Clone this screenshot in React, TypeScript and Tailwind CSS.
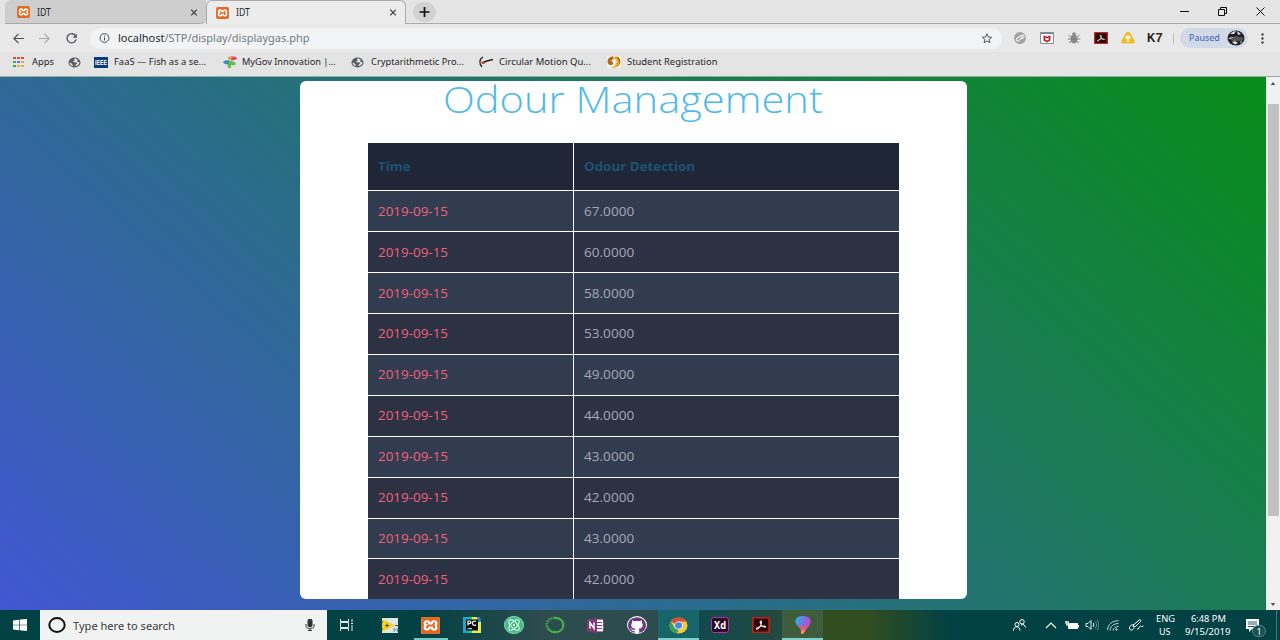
import { useLayoutEffect, useRef, useState, type ReactNode } from "react";
import { SiXampp, SiGithub } from "react-icons/si";
import { Atom } from "lucide-react";

/** Single-line label stretched horizontally to an exact width. */
function Label({ w, className = "", children }: { w: number; className?: string; children: ReactNode }) {
  const ref = useRef<HTMLSpanElement>(null);
  const [scale, setScale] = useState(1);
  useLayoutEffect(() => {
    if (ref.current) setScale(w / ref.current.offsetWidth);
  }, [w]);
  return (
    <span className={"block shrink-0 whitespace-nowrap " + className} style={{ width: w }}>
      <span ref={ref} className="inline-block origin-left" style={{ transform: `scaleX(${scale})` }}>
        {children}
      </span>
    </span>
  );
}

function XamppIcon({ className }: { className: string }) {
  return (
    <span className={"block shrink-0 overflow-hidden rounded-[2px] bg-[#d4601c] " + className}>
      <span className="block h-full w-full rounded-[2px] bg-white text-[#e36a25]">
        <SiXampp preserveAspectRatio="none" className="h-full w-full" />
      </span>
    </span>
  );
}

function Close({ className }: { className: string }) {
  return (
    <svg viewBox="0 0 10 10" className={className} stroke="currentColor" strokeWidth="1.500" fill="none">
      <path d="m1 1 8 8M9 1 1 9" />
    </svg>
  );
}

function Globe() {
  return (
    <svg viewBox="0 0 14 14" className="h-[11px] w-[13px] shrink-0" preserveAspectRatio="none">
      <circle cx="7" cy="7" r="6.500" fill="#5a5d61" />
      <path d="M7.500 1.800c-1 .4-1.300 1.300-.6 1.900.8.6.2 1.500-.8 1.500-.9.100-.6 1.400.4 1.500l2.700.2c1.200.2.700 1.500-.1 1.900-.9.500-.5 2.200-1.800 2.900 3.500-.2 5.100-2.700 4.900-5.200l-1.800-.2c-.9-.1-.6-1.300.2-1.500C10.300 3 9 2 7.500 1.800ZM1.600 7c.2 2.200 1.400 3.800 3.500 4.500l.2-1.500C3.900 9.700 4.300 8 3.200 7.600Z" fill="#e8e8e8" />
    </svg>
  );
}

function AcrobatIcon({ className }: { className: string }) {
  return (
    <svg viewBox="0 0 20 20" className={className} preserveAspectRatio="none">
      <rect x="1" y="1" width="18" height="18" fill="#2a0505" stroke="#c5221b" strokeWidth="1.800" />
      <path d="M9.600 5c1.500-.4 1.100 3.200-.2 6-1.200 2.700-3.400 4.800-4.400 4.100-.9-.8 2-2.700 4.800-3.400 2.700-.7 5.500-.6 5.400.6-.1 1.300-3.200.1-4.800-2.400C9 7.800 8.700 5.300 9.600 5Z" fill="none" stroke="#f1e6e6" strokeWidth="1.200" />
    </svg>
  );
}

function Tab({ active = false }: { active?: boolean }) {
  return (
    <div
      className={
        "flex h-full shrink-0 items-center pr-2 " +
        (active
          ? "w-[200px] rounded-t-md border-x border-t border-[#aaabad] bg-[#ececec] pl-[9px]"
          : "w-[201px] rounded-tl-md rounded-br-md border-b border-[#a9a9a9] bg-[#cecece] pl-3 pt-px")
      }
    >
      <XamppIcon className="h-3 w-[13px]" />
      <Label w={14} className="ml-[7px] text-[10px] text-[#2b2b2b]">IDT</Label>
      <Close className="ml-auto h-[7px] w-2 text-[#333]" />
    </div>
  );
}

function TitleBar() {
  return (
    <div className="flex h-6 shrink-0 bg-[#e5e5e5] pl-[5px]">
      <Tab />
      <Tab active />
      <div className="flex flex-1 items-center border-b border-[#ababab] pl-[7px]">
        <span className="flex h-5 w-[23px] items-center justify-center rounded-full bg-[#d2d2d2]">
          <svg viewBox="0 0 10 10" className="h-[10px] w-[11px]" stroke="#111" strokeWidth="1.700"><path d="M5 0v10M0 5h10" /></svg>
        </span>
        <div className="ml-auto flex items-center gap-[29px] pr-[15px] text-[#111]">
          <svg viewBox="0 0 9 9" className="h-[9px] w-[9px]" stroke="currentColor"><path d="M0 4.500h9" /></svg>
          <svg viewBox="0 0 9 9" className="h-[9px] w-[9px]" stroke="currentColor" fill="none"><path d="M.5 2.500h6v6h-6zM2.500 2.500v-2h6v6h-2" /></svg>
          <svg viewBox="0 0 9 9" className="h-[9px] w-[9px]" stroke="currentColor" fill="none"><path d="m.5.500 8 8M8.500.5l-8 8" /></svg>
        </div>
      </div>
    </div>
  );
}

function Toolbar() {
  return (
    <div className="flex h-[28px] shrink-0 items-center bg-[#e9e9e9] pl-3 pr-4">
      <svg viewBox="0 0 12 12" className="h-[11px] w-[13px]" fill="none" stroke="#4d5155" strokeWidth="1.300"><path d="M12 6H1M6 1 1 6l5 5" /></svg>
      <svg viewBox="0 0 12 12" className="ml-[13px] h-[11px] w-[13px]" fill="none" stroke="#ababab" strokeWidth="1.300"><path d="M0 6h11M6 1l5 5-5 5" /></svg>
      <svg viewBox="0 0 12 12" className="ml-[14px] h-[11px] w-[13px]" fill="none" stroke="#4d5155" strokeWidth="1.400"><path d="M10.500 3.300A5 5 0 1 0 11 7" /><path d="M11.700.8v4.400H7.300Z" fill="#4d5155" stroke="none" /></svg>
      <div className="ml-[12px] flex h-[21px] w-[912px] shrink-0 items-center rounded-full bg-[#f1f3f4] pl-[9px] pr-[9px]">
        <svg viewBox="0 0 12 12" className="h-[10px] w-[11px]" fill="none" stroke="#4d5155" strokeWidth="1.200"><circle cx="6" cy="6" r="5.300" /><path d="M6 5.200v3.800M6 2.800v1.300" /></svg>
        <Label w={192} className="ml-2 text-[11px] leading-4 text-[#757a7f]">
          <span className="text-[#27292c]">localhost</span>/STP/display/displaygas.php
        </Label>
        <svg viewBox="0 0 14 14" className="ml-auto h-[11px] w-3" fill="none" stroke="#4c5054" strokeWidth="1.200"><path d="m7 1 1.700 4 4.300.4-3.300 2.800 1 4.200L7 10.200l-3.700 2.200 1-4.200L1 5.400 5.300 5Z" /></svg>
      </div>
      <div className="ml-[11px] flex items-center gap-[12.900px]">
        <svg viewBox="0 0 14 12" className="h-3 w-[14px]"><circle cx="7" cy="6" r="6" fill="#a2a2a2" /><path d="m6.500 8.500-1 .6a1.600 1.600 0 0 1-1.700-2.600l3-2.200a1.600 1.600 0 0 1 2.100 2L6.500 7.500M8 4l1.600-1a1.400 1.400 0 0 1 1.300 2.200L9.300 6.500" fill="none" stroke="#f5f5f5" strokeWidth="1.100" /></svg>
        <svg viewBox="0 0 14 12" className="h-3 w-[14px]"><path d="M.5.5h13v11H.5z" fill="#fff" stroke="#8b8f94" /><path d="M.5.500h13v1.500H.5z" fill="#758494" /><path d="M3.500 3.300 7 4.700l3.500-1.400v5.300L7 10.500 3.500 8.600Z" fill="#b72030" /><path d="m5.400 5.600 1.600.8 1.600-.8v2.100L7 8.500l-1.600-.8Z" fill="#fff" /></svg>
        <svg viewBox="0 0 14 12" className="h-3 w-[14px]" fill="#8c8c8c"><ellipse cx="7" cy="7" rx="3.300" ry="4.600" /><circle cx="7" cy="2" r="1.800" /><path d="M1.500 3 4 5M12.500 3 10 5M.800 7H13.200M2 11l3-2.500M12 11 9 8.500" stroke="#777" strokeWidth=".9" /></svg>
        <AcrobatIcon className="h-3 w-[14px]" />
        <svg viewBox="0 0 14 12" className="h-3 w-[14px]"><path d="M7 0c1.500 0 2 .7 3 2.500L13.500 9c.7 1.500 0 2.500-1.500 2.500H2C.5 11.500-.2 10.500.5 9L4 2.500C5 .700 5.500 0 7 0Z" fill="#f4b920" /><path d="M7 10V4M4.300 6.500 7 3.800l2.700 2.700" stroke="#fff" strokeWidth="1.500" fill="none" /></svg>
        <span className="flex w-[14px]">
          <Label w={8} className="font-['Liberation_Sans'] text-[13px] font-bold leading-3 text-[#181818]">K</Label>
          <Label w={7} className="font-['Liberation_Sans'] text-[13px] font-bold leading-3 text-[#3a2a23]">7</Label>
        </span>
      </div>
      <span className="ml-[12px] h-[11px] w-px bg-[#bcbcbc]" />
      <div className="ml-[6px] flex h-5 w-[68px] items-center rounded-full bg-[#d2d9e7] pl-[9px]">
        <Label w={31} className="text-[9.800px] text-[#3a63bd]">Paused</Label>
        <svg viewBox="0 0 18 16" className="ml-[7px] h-4 w-[18px]">
          <ellipse cx="9" cy="8" rx="8.500" ry="7.500" fill="#202020" />
          <path d="M3 4c2-2 4-3 6-3l-2 3Zm7-3 4 3-3 1ZM1 8l5-1 3 1-4 2Zm10-1 5 1-3 1.500ZM5 12l3-1 3 2-3 1.500Zm8 0 2-1-1 2.500Z" fill="#ddd" />
          <path d="m3 9 6-3 8 2-2 3H5Z" fill="#555" />
        </svg>
      </div>
      <svg viewBox="0 0 3 11" className="ml-auto h-[11px] w-[3px]" fill="#444"><circle cx="1.500" cy="1.500" r="1.200" /><circle cx="1.500" cy="5.500" r="1.200" /><circle cx="1.500" cy="9.500" r="1.200" /></svg>
    </div>
  );
}

const APP_DOTS = ["#e04a3f", "#e04a3f", "#e04a3f", "#3fa65a", "#4482e8", "#e8ae33", "#3fa65a", "#e8ae33", "#e8ae33"];

function Bookmarks() {
  return (
    <div className="flex h-[25px] shrink-0 items-center border-b border-[#8fae9f] bg-[#e4e4e4] pl-[13px] pb-[4px] text-[9.800px] text-[#242424]">
      <span className="grid w-[11px] grid-cols-3 gap-x-[1.500px] gap-y-[2px]">
        {APP_DOTS.map((c, i) => <span key={i} className="h-[2px]" style={{ background: c }} />)}
      </span>
      <Label w={22} className="ml-2">Apps</Label>
      <span className="ml-[14px]"><Globe /></span>
      <span className="ml-[13px] flex h-[11px] w-[14px] items-center justify-center bg-[#0c3c78] text-white">
        <Label w={12} className="font-['Liberation_Sans'] text-[8px] font-bold leading-[11px]">IEEE</Label>
      </span>
      <Label w={92} className="ml-[6px]">FaaS — Fish as a se...</Label>
      <svg viewBox="0 0 14 12" className="ml-[17px] h-3 w-[14px]"><path d="M5 2c2-2 8-2 9 0-1 3-4 1-5 3Z" fill="#d94a76" /><path d="M0 6c2-2 5-2 7-1l-1 3C4 9 1 8 0 6Z" fill="#2693b8" /><path d="M7 5c2 0 6 1 6 3-1 2-4 1-5 1v3H5c-1-3 0-5 2-7Z" fill="#6abc45" /><circle cx="7" cy="2.200" r="1.800" fill="#ee9b37" /></svg>
      <Label w={94} className="ml-[5px]">MyGov Innovation |...</Label>
      <span className="ml-[15px]"><Globe /></span>
      <Label w={93} className="ml-[7px]">Cryptarithmetic Pro...</Label>
      <svg viewBox="0 0 14 12" className="ml-[15px] h-3 w-[14px]" fill="none"><path d="M4 1C0 3 0 8 3 11" stroke="#222" strokeWidth="1.200" /><path d="m3 7 5-2 6-1.500" stroke="#222" strokeWidth="1.600" /><path d="m2.500 6.500 3 .5" stroke="#d63434" strokeWidth="1.800" /></svg>
      <Label w={92} className="ml-[6px]">Circular Motion Qu...</Label>
      <svg viewBox="0 0 14 12" className="ml-4 h-3 w-[14px]"><path d="M0 0h14v12H0z" fill="#f5f0e4" /><path d="M6.500.500C1 0-1 6 2 8.500c2 1.500 5 0 4-2.500C4 6.500 4 4 6.500 3Z" fill="#b06a1a" /><path d="M8 .500c5-.5 6.500 5 4.500 8.500-2 2.500-6 3.500-8.500 2 3 0 5-1 4.500-3.500C11 6.500 10 3 7 3Z" fill="#e3a629" /><path d="M10 .800c3 1 4 5 2.500 8V5Z" fill="#6d3d17" /></svg>
      <Label w={90} className="ml-[6px]">Student Registration</Label>
    </div>
  );
}

const READINGS = ["67.0000", "60.0000", "58.0000", "53.0000", "49.0000", "44.0000", "43.0000", "42.0000", "43.0000", "42.0000"];

function Page() {
  return (
    <div className="flex min-h-0 flex-1">
      <main className="flex min-w-0 flex-1 bg-[linear-gradient(41.6deg,#4257d3,#078d18)] pl-[300px] pt-[4px] font-['Open_Sans']">
        <section className="flex h-[518px] w-[667px] flex-col items-center rounded-[6px] bg-white">
          <h1 className="h-[62px] shrink-0 pr-[1px]">
            <Label w={379.5} className="text-[37.200px] font-light leading-[35px] text-[#50b9ec]">Odour Management</Label>
          </h1>
          <div className="flex w-[531px] shrink-0 flex-col gap-px">
            <div className="flex h-[47.400px] gap-px font-bold text-[#1d5270]">
              <div className="flex w-[205px] items-center bg-[#1f2638] pl-[10px]"><Label w={33} className="text-[11.700px]">Time</Label></div>
              <div className="flex flex-1 items-center bg-[#1f2638] pl-[10px]"><Label w={111} className="text-[11.700px]">Odour Detection</Label></div>
            </div>
            {READINGS.map((value, i) => (
              <div key={i} className="group flex h-[39.900px] gap-px text-[11.700px] last:h-[39.500px]">
                <div className="flex w-[205px] items-center bg-[#2c3144] pl-[10px] pt-[0.500px] text-[#f0607b] group-even:bg-[#323c50]"><Label w={70}>2019-09-15</Label></div>
                <div className="flex flex-1 items-center bg-[#2c3144] pl-[10px] pt-[0.500px] text-[#a4a7b4] group-even:bg-[#323c50]"><Label w={50}>{value}</Label></div>
              </div>
            ))}
          </div>
        </section>
      </main>
      <div className="flex w-[14px] shrink-0 flex-col items-center bg-[#f1f1f1]">
        <svg viewBox="0 0 6 4" className="mt-[5px] h-[3px] w-[6px]"><path d="m0 4 3-4 3 4Z" fill="#505050" /></svg>
        <div className="mt-[19px] h-[412px] w-[11px] bg-[#c1c1c1]" />
        <svg viewBox="0 0 6 4" className="mb-[4px] mt-auto h-[3px] w-[6px]"><path d="m0 0 3 4 3-4Z" fill="#505050" /></svg>
      </div>
    </div>
  );
}

function TaskItem({ children, className = "" }: { children: ReactNode; className?: string }) {
  return <div className={"flex h-full w-[41.300px] shrink-0 items-center justify-center " + className}>{children}</div>;
}

function Taskbar() {
  return (
    <footer className="flex h-[30px] shrink-0 items-center bg-[linear-gradient(90deg,#024144_0,#024144_420px,#2c4c4e_540px,#2c4c4e_655px,#12494e_700px,#24493f_780px,#304d20_825px,#304d20_870px,#024144_950px)] text-white">
      <div className="flex w-10 justify-center">
        <svg viewBox="0 0 14 12" className="h-3 w-[14px]" fill="#fff"><path d="m0 1.500 6-.8v5H0ZM6.700.6 14 0v5.700H6.700ZM0 6.300h6v5l-6-.800ZM6.700 6.300H14V12l-7.300-.7Z" /></svg>
      </div>
      <div className="flex h-full w-[287px] items-center bg-[#f1f3f3] pl-2 pr-[12px]">
        <svg viewBox="0 0 18 16" className="h-4 w-[18px]" fill="none"><ellipse cx="9" cy="8" rx="7.700" ry="6.900" stroke="#111" strokeWidth="2" /></svg>
        <Label w={102} className="ml-[7px] pt-px text-[11.400px] text-[#3a3a3a]">Type here to search</Label>
        <svg viewBox="0 0 10 12" className="ml-auto h-3 w-[10px]" fill="none" stroke="#333"><rect x="3" y=".5" width="4" height="7" rx="1" fill="#333" /><path d="M1 5v2.500C1 10 9 10 9 7.500V5M5 9.500v2M3 11.500h4" /></svg>
      </div>
      <div className="flex w-[42px] justify-center pr-[2px]">
        <svg viewBox="0 0 14 12" className="h-3 w-[14px]" fill="none" stroke="#e5eeee"><path d="M.500 0v2.500h8V0M.500 12V9.500h8V12M.500 3.500v5h8v-5ZM12 0v3M12 6v6M11 4.500h2" /></svg>
      </div>
      <div className="flex h-full">
        <TaskItem>
          <svg viewBox="0 0 18 15" className="h-[15px] w-[18px]"><path d="M1 0h16v15H1z" fill="#dce5e8" /><path d="M1 1v13l13-6.500Z" fill="#f6d222" /><path d="M14 7.500h4M4 7.500h4M6 5.500v4M0 4h2M0 11h2" stroke="#454d42" /><path d="M12 11h2v2h-2M15 11h2l-1 3" stroke="#59798b" fill="none" strokeWidth=".8" /></svg>
        </TaskItem>
        <TaskItem>
          <div className="flex h-[30px] w-[34px] items-center justify-center border-b-2 border-[#76c9c6] pt-[2px]"><XamppIcon className="h-[17px] w-[19px]" /></div>
        </TaskItem>
        <TaskItem>
          <svg viewBox="0 0 18 16" className="h-4 w-[18px]"><path d="M0 0h10l4 7-5 9H0Z" fill="#21c68c" /><path d="M9 0h7l2 5v11h-9Z" fill="#e3ed4b" /><path d="m0 0 7 1-2 15H0Z" fill="#20a9c7" /><path d="M14 0h3l1 5h-3Z" fill="#2288ce" /><path d="M3 2.500h12v11H3z" fill="#080808" /><path d="M4.500 11.700H9" stroke="#fff" /><path d="M5 8.500V4h1.500c2 0 2 2.700 0 2.700H5M13 4.600c-2-1.300-3.800 0-3.500 1.800.2 1.800 2 2.600 3.600 1.300" fill="none" stroke="#fff" strokeWidth="1.200" /></svg>
        </TaskItem>
        <TaskItem>
          <span className="flex h-[18px] w-5 items-center justify-center rounded-[50%] bg-[#4bb98a] ring-1 ring-inset ring-[#79cfa6]"><Atom size={14} color="#d9fbe8" strokeWidth={1.8} /></span>
        </TaskItem>
        <TaskItem>
          <svg viewBox="0 0 20 18" className="h-[18px] w-5" fill="none" stroke="#43b049"><path d="M10 1.800c5 0 8.300 3 8.300 7.200S15 16.200 10 16.200c-3 0-5-1-6.500-3" strokeWidth="2.200" /><path d="M10 1.800C5 1.800 1.700 5 1.700 9c0 1.800.7 3 1.800 4.200" strokeWidth="2.400" strokeDasharray="1.500 1" /></svg>
        </TaskItem>
        <TaskItem>
          <svg viewBox="0 0 18 15" className="h-[15px] w-[18px]"><path d="M9 2h7v11H9z" fill="#fff" stroke="#e9d9ec" /><path d="M10 4.500h5M10 7.500h5M10 10.500h5M16.500 2v3M16.500 6v3M16.500 10v3" stroke="#80397b" /><path d="m0 1.500 10-1.500v15L0 13.500Z" fill="#80397b" /><path d="M3 10.500v-6l4 6v-6" stroke="#fff" strokeWidth="1.400" fill="none" /></svg>
        </TaskItem>
        <TaskItem>
          <span className="flex h-[18px] w-5 items-center justify-center rounded-[50%] bg-white"><SiGithub preserveAspectRatio="none" className="h-4 w-[18px] text-[#6b3a81]" /></span>
        </TaskItem>
        <TaskItem className="border-b-2 border-[#82cfce] bg-[#17646a]">
          <svg viewBox="0 0 20 20" className="mt-[2px] h-[17px] w-[19px]" preserveAspectRatio="none"><circle cx="10" cy="10" r="9.500" fill="#f5c83b" /><path d="M10 10 1.800 5.200A9.500 9.500 0 0 1 18.200 5.200H10Z" fill="#dc4a3b" /><path d="m1.800 5.200 4 7.300 4.200 2.500-2 4.300A9.500 9.500 0 0 1 1.800 5.200Z" fill="#34a15a" /><circle cx="10" cy="10" r="4.700" fill="#f2f2f2" /><circle cx="10" cy="10" r="3.700" fill="#4687ed" /></svg>
        </TaskItem>
        <TaskItem>
          <span className="flex h-4 w-[18px] items-center justify-center rounded-[3px] border border-[#a93595] bg-[#2b0628]"><Label w={12} className="text-[10px] font-bold leading-3">Xd</Label></span>
        </TaskItem>
        <TaskItem><AcrobatIcon className="h-4 w-[18px]" /></TaskItem>
        <TaskItem className="border-b-2 border-[#82cfce] bg-[#3d5d3c]">
          <svg viewBox="0 0 16 18" className="mt-[2px] h-[18px] w-4">
            <defs>
              <linearGradient id="drop" x1="0" y1="0" x2="1" y2=".3"><stop stopColor="#22bdf0" /><stop offset=".55" stopColor="#7673e1" /><stop offset="1" stopColor="#c943cf" /></linearGradient>
              <linearGradient id="tip" x1="0" y1="0" x2="0" y2="1"><stop offset=".45" stopColor="#ef5575" stopOpacity="0" /><stop offset=".7" stopColor="#ef5575" /><stop offset="1" stopColor="#f8b536" /></linearGradient>
            </defs>
            <path d="M8 0c10 0 9 8 4 12-2 2-2 5-5 6-2 0 0-3-2-6C-2 7-1 0 8 0Z" fill="url(#drop)" />
            <path d="M8 0c10 0 9 8 4 12-2 2-2 5-5 6-2 0 0-3-2-6C-2 7-1 0 8 0Z" fill="url(#tip)" />
          </svg>
        </TaskItem>
      </div>
      <div className="ml-auto flex h-full items-center">
        <svg viewBox="0 0 13 12" className="h-3 w-[13px]" fill="none" stroke="#fff"><circle cx="9" cy="2.800" r="2.200" /><circle cx="4" cy="5.500" r="2" /><path d="M.500 11.500c0-5 6.500-5 6.500 0M8 6c2.500-1 4 0 4.500 2.500" /></svg>
        <svg viewBox="0 0 12 7" className="ml-[19px] h-[7px] w-3" fill="none" stroke="#fff" strokeWidth="1.100"><path d="m1 6 5-5 5 5" /></svg>
        <svg viewBox="0 0 14 9" className="ml-[8px] h-[9px] w-[14px]"><path d="M3.500 2.500h9v5h-9Z" fill="#fff" stroke="#fff" /><path d="M13.500 4v2.500" stroke="#fff" /><path d="M0 1h4M1 0v3h2V0M2 3v2" stroke="#fff" fill="none" /></svg>
        <svg viewBox="0 0 14 12" className="ml-[6px] h-3 w-[14px]" fill="none" stroke="#e5eeee"><path d="M1 4.500h2l3-3v9l-3-3H1Z" /><path d="M8 4c1 1 1 3 0 4" /><path d="M10 2.500c2 2 2 5 0 7M12 1c2.500 3 2.500 7 0 10" stroke="#77999a" /></svg>
        <svg viewBox="0 0 12 11" className="ml-2 h-[11px] w-3" fill="none" stroke="#c7d6d6"><path d="M.500 10C1 4 5 .800 11.500.700M3 10.500c0-4 4-7 8.500-7M6 10.500c0-2 3-4.200 5.500-4.200" /><circle cx="9.500" cy="9.500" r="1" fill="#fff" stroke="none" /></svg>
        <svg viewBox="0 0 15 12" className="ml-[10px] h-3 w-[15px]" fill="none" stroke="#fff"><path d="m4 8 1-2.500L10 1c1-.9 2.500.2 1.500 1.500l-5 5L4 8ZM5 6C2 5 .5 7.500.500 9c0 3 3.500 2.500 4.500 0M8 10c2 1 2-3 3.500-3 1 0 1 1.500 3 0" /></svg>
        <div className="ml-[11px] flex h-full w-5 flex-col items-center pt-[2px] text-[9.800px] leading-[13px]">
          <Label w={19}>ENG</Label>
          <Label w={12}>US</Label>
        </div>
        <div className="ml-[10px] flex h-full w-[46px] flex-col items-center pt-[2px] text-[9.800px] leading-[13px]">
          <Label w={35}>6:48 PM</Label>
          <Label w={46}>9/15/2019</Label>
        </div>
        <div className="relative ml-[15px] h-3 w-5">
          <svg viewBox="0 0 13 13" className="h-[13px] w-[13px]"><path d="M0 0h13v10H6l-3 3v-3H0Z" fill="#fff" /><path d="M2 3h9M2 5h9M2 7.500h6" stroke="#285d60" /></svg>
          <span className="absolute left-[6px] top-[6px] flex h-3 w-[14px] items-center justify-center rounded-full border border-[#54878a] bg-[#174f53] text-[9px] leading-none">1</span>
        </div>
        <span className="ml-[10px] mr-[3px] h-full w-px bg-[#4b7577]" />
      </div>
    </footer>
  );
}

export default function App() {
  return (
    <div className="flex h-[640px] w-[1280px] flex-col overflow-hidden font-['Noto_Sans',sans-serif]">
      <TitleBar />
      <Toolbar />
      <Bookmarks />
      <Page />
      <Taskbar />
    </div>
  );
}
